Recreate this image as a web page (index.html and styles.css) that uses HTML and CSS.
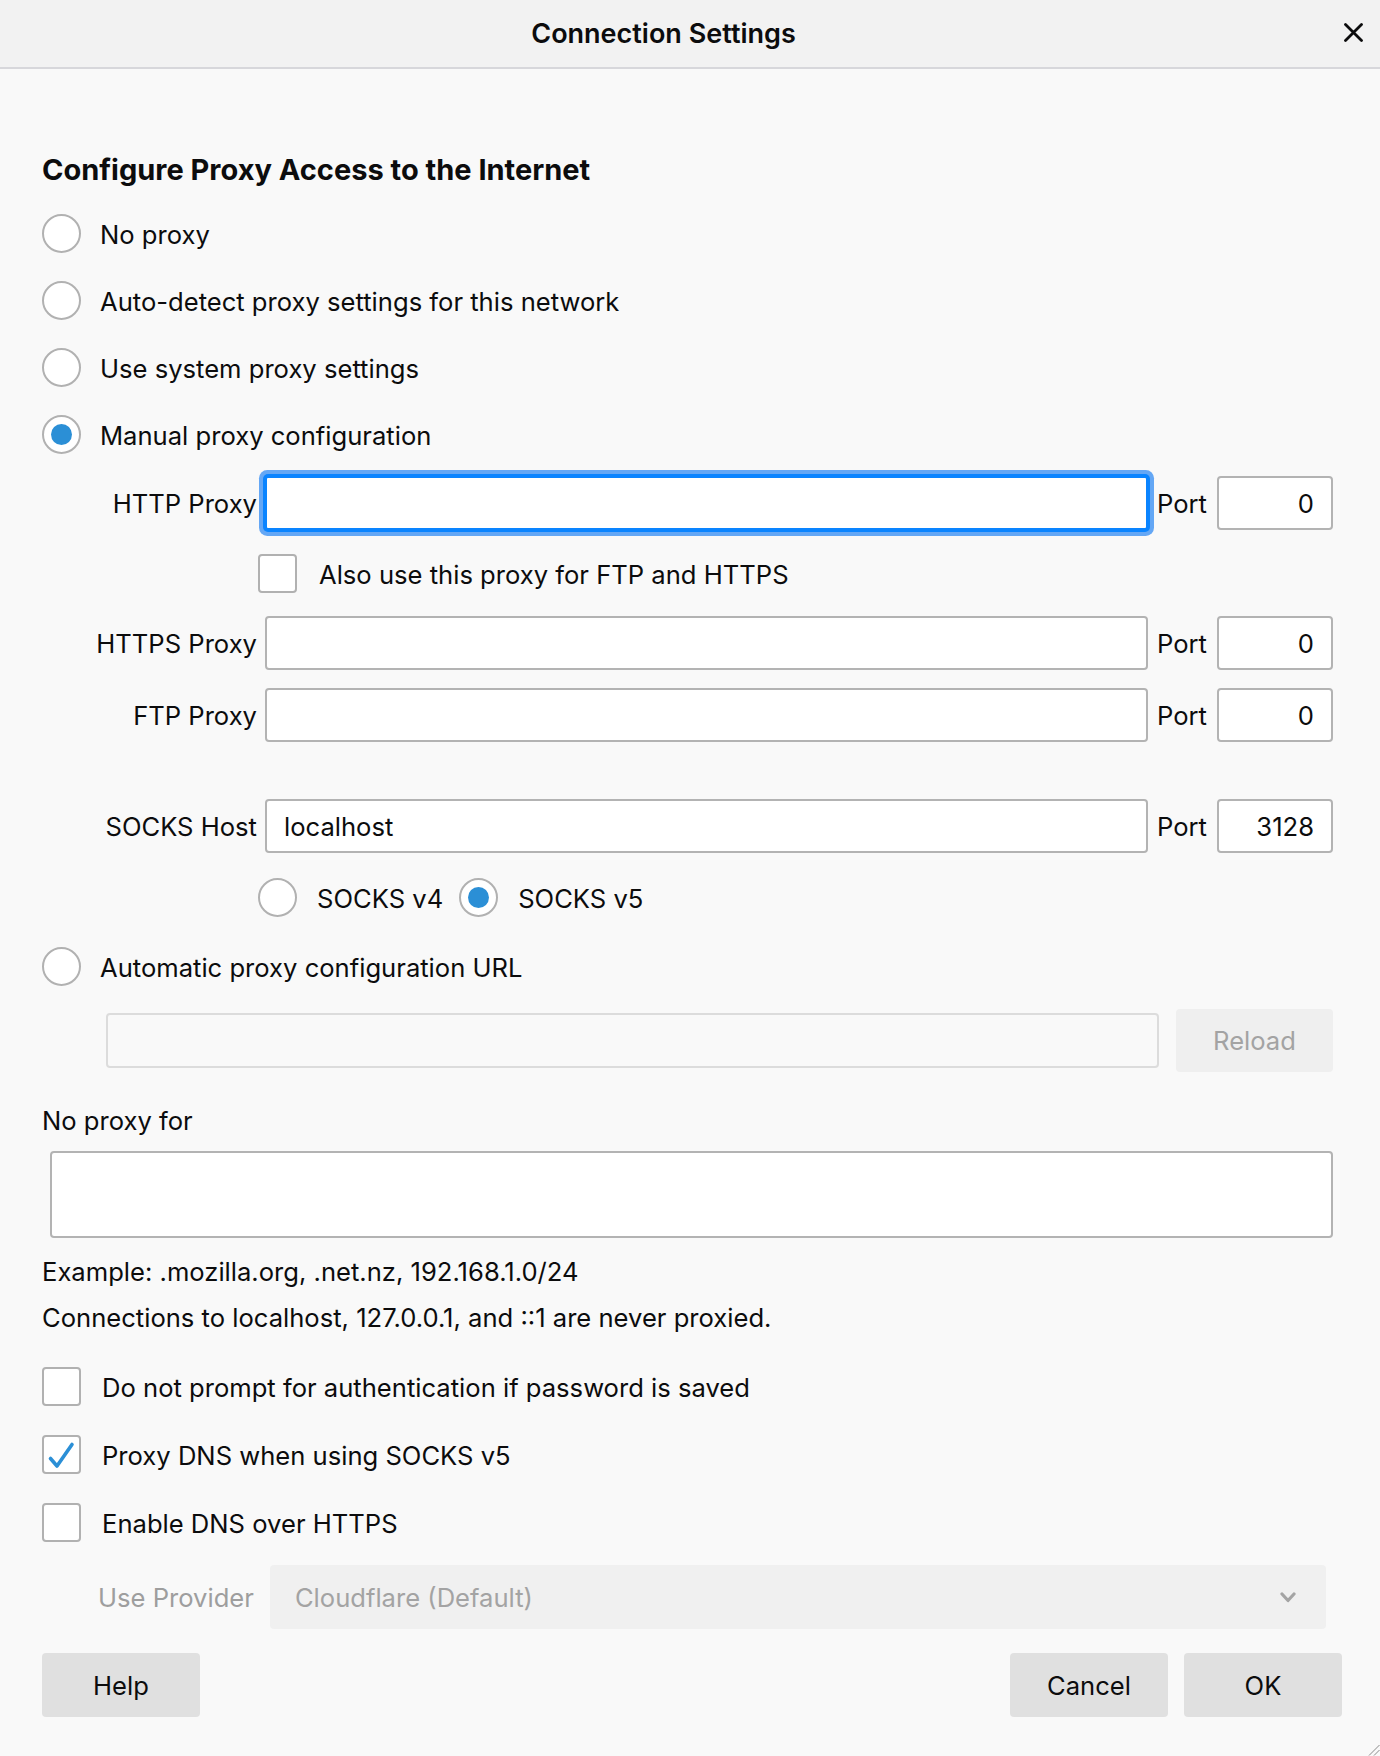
FILE: index.html
```html
<!DOCTYPE html>
<html lang="en">
<head>
<meta charset="utf-8">
<title>Connection Settings</title>
<link rel="stylesheet" href="styles.css">
</head>
<body>
<div class="titlebar">
  <div class="title">Connection Settings</div>
  <svg class="close" width="19" height="19" viewBox="0 0 19 19"><path d="M1.5 1.5 L17.5 17.5 M17.5 1.5 L1.5 17.5" stroke="#0c0c0d" stroke-width="2.8" stroke-linecap="round"/></svg>
</div>

<div class="main">
  <h1 class="heading">Configure Proxy Access to the Internet</h1>

  <div class="opt-row"><span class="radio"></span><span class="opt-label">No proxy</span></div>
  <div class="opt-row"><span class="radio"></span><span class="opt-label">Auto-detect proxy settings for this network</span></div>
  <div class="opt-row"><span class="radio"></span><span class="opt-label">Use system proxy settings</span></div>
  <div class="opt-row"><span class="radio checked"></span><span class="opt-label">Manual proxy configuration</span></div>

  <div class="field-row row-http">
    <span class="field-label">HTTP Proxy</span>
    <input class="textbox focused" type="text" value="">
    <span class="port-label">Port</span>
    <input class="textbox port" type="text" value="0">
  </div>

  <div class="field-row row-also">
    <div class="sub-check">
      <span class="checkbox"></span><span class="check-label">Also use this proxy for FTP and HTTPS</span>
    </div>
  </div>

  <div class="field-row row-https">
    <span class="field-label">HTTPS Proxy</span>
    <input class="textbox" type="text" value="">
    <span class="port-label">Port</span>
    <input class="textbox port" type="text" value="0">
  </div>

  <div class="field-row row-ftp">
    <span class="field-label">FTP Proxy</span>
    <input class="textbox" type="text" value="">
    <span class="port-label">Port</span>
    <input class="textbox port" type="text" value="0">
  </div>

  <div class="field-row row-socks">
    <span class="field-label">SOCKS Host</span>
    <input class="textbox" type="text" value="localhost">
    <span class="port-label">Port</span>
    <input class="textbox port" type="text" value="3128">
  </div>

  <div class="field-row row-socksver">
    <div class="socks-versions">
      <span class="radio"></span><span class="ver-label">SOCKS v4</span>
      <span class="radio checked"></span><span class="ver-label">SOCKS v5</span>
    </div>
  </div>

  <div class="opt-row row-auto"><span class="radio"></span><span class="opt-label">Automatic proxy configuration URL</span></div>

  <div class="auto-url">
    <input class="textbox disabled" type="text" value="" disabled>
    <button class="btn reload" disabled>Reload</button>
  </div>

  <div class="plain-label noproxy-label">No proxy for</div>
  <textarea class="noproxy-box"></textarea>
  <div class="plain-label example">Example: .mozilla.org, .net.nz, 192.168.1.0/24</div>
  <div class="plain-label never">Connections to localhost, 127.0.0.1, and ::1 are never proxied.</div>

  <div class="check-row first"><span class="checkbox"></span><span class="check-label">Do not prompt for authentication if password is saved</span></div>
  <div class="check-row"><span class="checkbox"><svg width="35" height="35" viewBox="0 0 35 35"><path d="M6.5 21.5 L13 29 L28 7.5" fill="none" stroke="#2b8fd6" stroke-width="3.6" stroke-linecap="round" stroke-linejoin="round"/></svg></span><span class="check-label">Proxy DNS when using SOCKS v5</span></div>
  <div class="check-row"><span class="checkbox"></span><span class="check-label">Enable DNS over HTTPS</span></div>

  <div class="provider-row">
    <span class="provider-label">Use Provider</span>
    <div class="select">
      <span>Cloudflare (Default)</span>
      <svg width="16" height="11" viewBox="0 0 16 11"><path d="M2 2 L8 8.5 L14 2" fill="none" stroke="#a4a4a4" stroke-width="3.2" stroke-linecap="round" stroke-linejoin="round"/></svg>
    </div>
  </div>

  <div class="buttons">
    <button class="btn">Help</button>
    <div class="spacer"></div>
    <button class="btn">Cancel</button>
    <button class="btn">OK</button>
  </div>
</div>

<svg class="grip" width="12" height="12" viewBox="0 0 12 12"><path d="M11.5 1 L1 11.5 M11.5 6 L6 11.5" stroke="#8a8a8a" stroke-width="1"/></svg>
</body>
</html>
```

FILE: styles.css
```css
* { box-sizing: border-box; }

html, body {
  margin: 0;
  padding: 0;
}

body {
  width: 1380px;
  height: 1756px;
  position: relative;
  overflow: hidden;
  background: #f9f9f9;
  color: #0c0c0d;
  font-family: Inter, "Noto Sans", sans-serif;
  font-size: 25.6px;
}

.titlebar {
  height: 69px;
  background: #f2f2f2;
  border-bottom: 2px solid #d7d7db;
  display: grid;
  grid-template-columns: 1fr auto 1fr;
  align-items: center;
}

.title {
  grid-column: 2;
  font-size: 27px;
  font-weight: 600;
  margin-right: 53px;
}

.close {
  grid-column: 3;
  justify-self: end;
  margin-right: 17px;
  margin-top: -3px;
}

.main {
  padding: 0 47px 0 42px;
}

.heading {
  margin: 83px 0 12px;
  font-size: 29px;
  line-height: 36px;
  font-weight: 700;
}

.opt-row {
  height: 67px;
  display: flex;
  align-items: center;
  gap: 19px;
}

.opt-label, .check-label, .ver-label {
  padding-top: 2px;
}

.radio {
  width: 39px;
  height: 39px;
  flex: none;
  border-radius: 50%;
  border: 2px solid #b1b1b1;
  background: #fff;
  display: flex;
  align-items: center;
  justify-content: center;
}

.radio.checked::after {
  content: "";
  width: 21px;
  height: 21px;
  border-radius: 50%;
  background: #2b8fd6;
}

.field-row {
  display: grid;
  grid-template-columns: 223px 883px 69px 116px;
  align-items: center;
  height: 54px;
}

.row-http { margin-top: 8px; }
.row-also { margin-top: 24px; height: 38px; }
.row-https { margin-top: 24px; }
.row-ftp { margin-top: 18px; }
.row-socks { margin-top: 57px; }
.row-socksver { margin-top: 25px; height: 39px; }

.field-label {
  justify-self: end;
  padding-right: 8px;
}

.port-label {
  padding-left: 9px;
}

.textbox {
  height: 54px;
  width: 100%;
  border: 2px solid #b3b3b3;
  border-radius: 4px;
  background: #fff;
  font-family: inherit;
  font-size: 25.6px;
  color: #0c0c0d;
  padding: 0 17px;
  margin: 0;
  outline: none;
}

.textbox.port {
  text-align: right;
}

.textbox.focused {
  border-color: #0a84ff;
  box-shadow: 0 0 0 2px #0a84ff, 0 0 0 6px #64a7f5;
  border-radius: 3px;
}

.textbox.disabled {
  background: #f9f9f9;
  border-color: #dcdcdc;
}

.sub-check {
  grid-column: 2 / 5;
  margin-left: -7px;
  display: flex;
  align-items: center;
  gap: 22px;
}

.checkbox {
  width: 39px;
  height: 39px;
  flex: none;
  border: 2px solid #b1b1b1;
  border-radius: 4px;
  background: #fff;
  display: block;
}

.checkbox svg { display: block; }

.socks-versions {
  grid-column: 2 / 5;
  margin-left: -7px;
  display: flex;
  align-items: center;
}

.ver-label {
  margin-left: 20px;
  margin-right: 16px;
}

.row-auto { margin-top: 16px; }

.auto-url {
  margin-top: 9px;
  margin-left: 64px;
  display: flex;
  align-items: center;
  gap: 17px;
  height: 63px;
}

.auto-url .textbox {
  flex: 1;
  height: 55px;
}

.btn {
  width: 158px;
  height: 64px;
  border: none;
  border-radius: 4px;
  background: #e0e0e0;
  font-family: inherit;
  font-size: 25.6px;
  color: #0c0c0d;
  padding: 0;
}

.btn.reload {
  width: 157px;
  height: 63px;
  background: #efefef;
  color: #a3a3a3;
}

.plain-label {
  line-height: 30px;
}

.noproxy-label { margin-top: 34px; }

.noproxy-box {
  display: block;
  margin: 15px 0 0 8px;
  width: calc(100% - 8px);
  height: 87px;
  border: 2px solid #b3b3b3;
  border-radius: 4px;
  background: #fff;
  resize: none;
  outline: none;
}

.example { margin-top: 19px; }
.never { margin-top: 16px; }

.check-row {
  height: 68px;
  display: flex;
  align-items: center;
  gap: 21px;
}

.check-row.first { margin-top: 19px; }

.provider-row {
  margin-top: 9px;
  margin-left: 56px;
  margin-right: 7px;
  height: 64px;
  display: flex;
  align-items: center;
  gap: 16px;
}

.provider-label {
  color: #9e9e9e;
}

.select {
  flex: 1;
  height: 64px;
  border-radius: 4px;
  background: #f0f0f0;
  color: #a3a3a3;
  display: flex;
  align-items: center;
  justify-content: space-between;
  padding: 0 30px 0 25px;
}

.select svg { display: block; }

.buttons {
  margin-top: 24px;
  margin-right: -9px;
  display: flex;
  gap: 16px;
}

.spacer { flex: 1; }

.grip {
  position: absolute;
  right: 0;
  bottom: 0;
}
```
